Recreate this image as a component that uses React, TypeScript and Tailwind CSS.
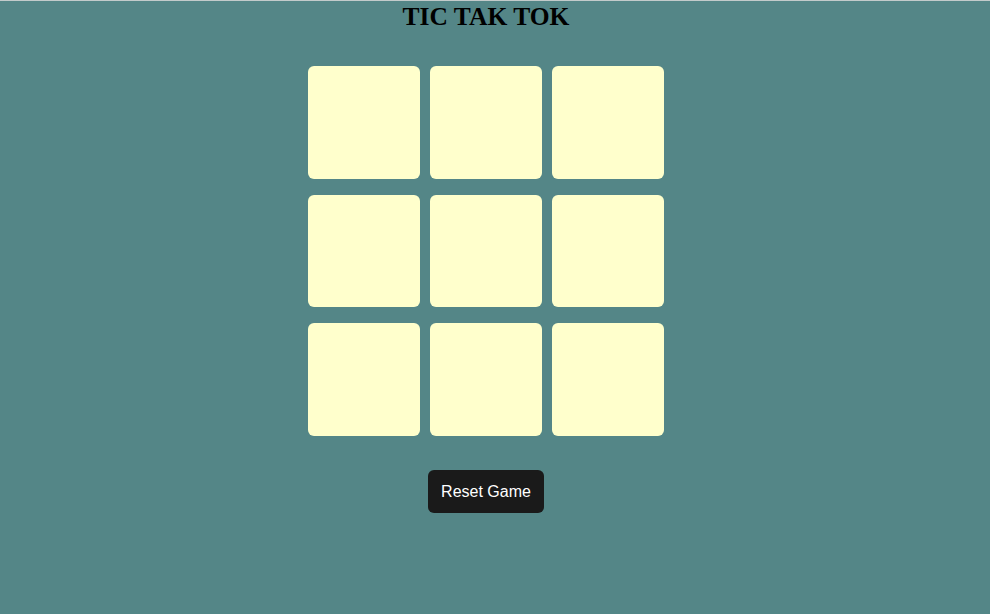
export default function App() {
  const cells = Array.from({ length: 9 });
  return (
    <div className="min-h-[614px] w-[990px] bg-[#548687] border-t border-[#c3cbcb]">
      <div className="w-[972px] flex flex-col items-center">
        <h1
          className="text-[25.5px] font-bold leading-[30px] mt-[1px] text-black"
          style={{ fontFamily: '"Liberation Serif", "Times New Roman", serif' }}
        >
          TIC TAK TOK
        </h1>
        <div className="mt-[34px] grid grid-cols-[112px_112px_112px] gap-x-[10px] gap-y-[16px]">
          {cells.map((_, i) => (
            <div key={i} className="w-[112px] h-[112.5px] rounded-[6px] bg-[#ffffcc]" />
          ))}
        </div>
        <button
          className="mt-[34.5px] w-[116px] h-[43px] rounded-[6px] bg-[#1a1a1a] text-white text-[16px]"
          style={{ fontFamily: '"Liberation Sans", Arial, sans-serif' }}
        >
          Reset Game
        </button>
      </div>
    </div>
  );
}
